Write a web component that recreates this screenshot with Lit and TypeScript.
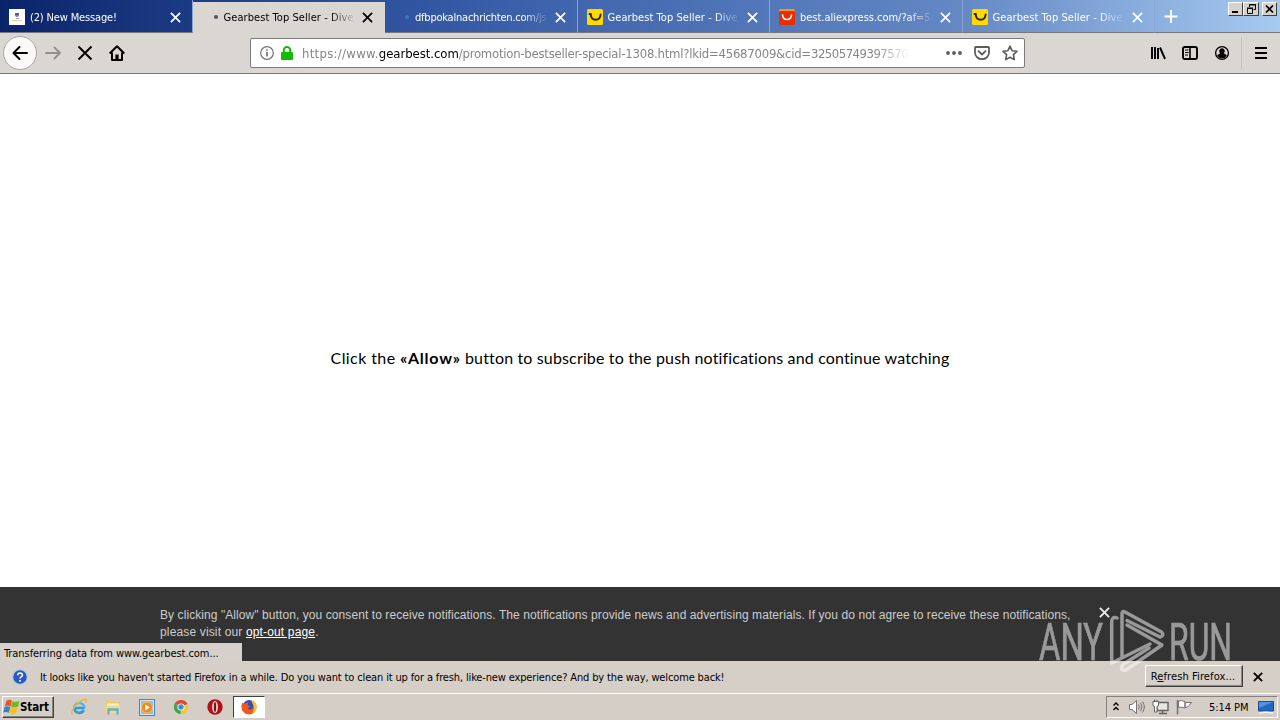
import { LitElement, css, html, svg } from "lit";
import { customElement, property } from "lit/decorators.js";
import { classMap } from "lit/directives/class-map.js";

interface Tab {
	title: string;
	icon: "mail" | "gear" | "ali" | "loading";
	active?: boolean;
	kind: string;
}

const TABS: Tab[] = [
	{ title: "(2) New Message!", icon: "mail", kind: "message" },
	{ title: "Gearbest Top Seller - Dive i", icon: "loading", active: true, kind: "gearbest" },
	{ title: "dfbpokalnachrichten.com/js", icon: "loading", kind: "dfb" },
	{ title: "Gearbest Top Seller - Dive i", icon: "gear", kind: "gearbest" },
	{ title: "best.aliexpress.com/?af=5c", icon: "ali", kind: "best" },
	{ title: "Gearbest Top Seller - Dive i", icon: "gear", kind: "gearbest" },
];

const cross = (size: number, width: number) => html`
	<svg width=${size} height=${size} viewBox="0 0 12 12" fill="none" stroke="currentColor" stroke-width=${width}>
		<path d="M1 1l10 10M11 1L1 11" />
	</svg>
`;

const favicons = {
	mail: svg`<rect width="16" height="16" fill="#fff" /><circle cx="8" cy="6" r="2" fill="#a96a8f" /><path d="M6 5h4" stroke="#4a4168" stroke-width="1.4" /><path d="M3 11.5h10" stroke="#d8dca8" stroke-width="1.2" /><path d="M7 9.5h3" stroke="#8d9ad0" />`,
	gear: svg`<rect width="16" height="16" rx="1.5" fill="#ffda00" /><path d="M2.500 5h1.200q.3 5.800 5 5.800 4.600-.1 4.900-5.300" fill="none" stroke="#2b2100" stroke-width="1.900" stroke-linecap="round" />`,
	ali: svg`<path d="M0 1.5Q0 0 1.5 0h13Q16 0 16 1.500V5H0z" fill="#f7971c" /><rect y="2" width="16" height="14" rx="1.500" fill="#e62e04" /><path d="M3.500 6c.5 6 8.500 6 9 0" fill="none" stroke="#fff" stroke-width="1.700" stroke-linecap="round" />`,
	loading: svg`<circle cx="8" cy="8" r="2" fill="currentColor" />`,
};

@customElement("browser-tab")
class BrowserTab extends LitElement {
	@property({ attribute: false }) tab!: Tab;

	static styles = css`
		:host {
			display: block;
			width: 192.5px;
			height: 33px;
		}
		.tab {
			display: flex;
			align-items: center;
			box-sizing: border-box;
			height: 33px;
			padding: 2px 11px 0 9px;
			color: #fff;
			border-right: 1px solid #8aa5d4;
			border-bottom: 1px solid #77787c;
		}
		.tab.active {
			height: 31px;
			margin: 2px 0.5px 0 0.5px;
			padding: 0 12px 0 9px;
			color: #000;
			background: #dad6d1;
			border-right: 0;
			border-color: #dad6d1;
		}
		.icon {
			width: 16px;
			height: 16px;
			margin-right: 5px;
			flex: none;
		}
		.loading {
			color: #4377bd;
			margin: 0 0 0 5px;
		}
		.active .loading {
			color: #53515b;
			margin-left: 6px;
			margin-right: -0.5px;
		}
		.title {
			flex: 1;
			overflow: hidden;
			white-space: nowrap;
			padding-top: 1px;
			font-size: 11px;
			line-height: 16px;
			margin-right: 6px;
			-webkit-mask-image: linear-gradient(to left, transparent, #000 26px);
		}
		.message {
			letter-spacing: -0.15px;
		}
		.gearbest {
			letter-spacing: 0.07px;
		}
		.dfb {
			letter-spacing: -0.22px;
		}
		.best {
			letter-spacing: -0.03px;
		}
		.close {
			display: flex;
		}
	`;

	render() {
		const { title, icon, active, kind } = this.tab;
		return html`
			<div class=${classMap({ tab: true, active: !!active })}>
				<svg class=${classMap({ icon: true, loading: icon === "loading" })} viewBox="0 0 16 16">${favicons[icon]}</svg>
				<span class=${classMap({ title: true, [kind]: true })}>${title}</span>
				<span class="close">${cross(11, 1.9)}</span>
			</div>
		`;
	}
}

@customElement("nav-bar")
class NavBar extends LitElement {
	static styles = css`
		:host {
			display: flex;
			align-items: center;
			box-sizing: border-box;
			height: 41px;
			padding: 0 11px 1px 3px;
			background: #dad6d1;
			border-bottom: 1px solid #77787a;
		}
		svg {
			display: block;
			flex: none;
			fill: none;
			stroke: currentColor;
		}
		.back {
			display: grid;
			place-items: center;
			box-sizing: border-box;
			width: 34px;
			height: 34px;
			border: 1px solid #aaa7a3;
			border-radius: 50%;
			background: #faf9f7;
		}
		.nav {
			display: flex;
			gap: 16px;
			margin-left: 8px;
			width: 205px;
		}
		.forward {
			color: #92908c;
		}
		.url {
			display: flex;
			align-items: center;
			box-sizing: border-box;
			width: 775px;
			height: 30px;
			padding: 0 6px 0 8px;
			background: #fff;
			border: 1px solid #7b7b7b;
			border-radius: 2px;
		}
		.address {
			width: 608px;
			margin-left: 7px;
			padding-top: 2px;
			overflow: hidden;
			white-space: nowrap;
			font-size: 13px;
			line-height: 20px;
			color: #858585;
			letter-spacing: -0.24px;
			-webkit-mask-image: linear-gradient(to left, transparent, #000 36px);
		}
		.scheme {
			letter-spacing: 0.3px;
		}
		.domain {
			color: #000;
			letter-spacing: -0.05px;
		}
		.cid {
			letter-spacing: -0.5px;
		}
		.info {
			color: #737373;
			margin-right: 4px;
		}
		.actions {
			display: flex;
			gap: 12px;
			margin-left: auto;
			color: #5c5c5c;
		}
		.dots {
			fill: currentColor;
			stroke: none;
		}
		.tools {
			display: flex;
			gap: 16px;
			margin-left: auto;
		}
		.divider {
			width: 1px;
			height: 32px;
			margin: 0 11px;
			background: #c4c1bc;
		}
	`;

	render() {
		return html`
			<span class="back">
				<svg width="16" height="16" viewBox="0 0 16 16" stroke-width="2" stroke-linecap="round" stroke-linejoin="round"><path d="M15 8H1.500M7.500 2l-6 6 6 6" /></svg>
			</span>
			<div class="nav">
				<svg class="forward" width="16" height="16" viewBox="0 0 16 16" stroke-width="1.800" stroke-linecap="round" stroke-linejoin="round"><path d="M1 8h14M9.500 2.500L15 8l-5.500 5.500" /></svg>
				<svg width="16" height="16" viewBox="0 0 16 16" stroke-width="1.900"><path d="M1.500 1.500l13 13M14.500 1.500l-13 13" /></svg>
				<svg width="16" height="16" viewBox="0 0 16 16" stroke-width="2" stroke-linejoin="round"><path d="M.7 8.500L8 1.300l7.300 7.200M3 7.500V15h10V7.500" /><path d="M8 15V9.500" stroke-width="3.200" /></svg>
			</div>
			<div class="url">
				<svg class="info" width="16" height="16" viewBox="0 0 16 16" stroke-width="1.200"><circle cx="8" cy="8" r="6.300" /><path d="M8 7v4.500M8 4.200v1.600" stroke-width="1.700" /></svg>
				<svg width="16" height="16" viewBox="0 0 16 16"><rect x="2" y="7" width="12" height="8" rx="1.200" fill="#12bc00" stroke="none" /><path d="M4.800 8V5.200a3.200 3.200 0 0 1 6.400 0V8" stroke="#12bc00" stroke-width="2" /></svg>
				<span class="address"><span class="scheme">https://www.</span><span class="domain">gearbest.com</span>/promotion-bestseller-special-1308.html?lkid=45687009&amp;cid=<span class="cid">32505749397570</span></span>
				<div class="actions">
					<svg class="dots" width="16" height="16" viewBox="0 0 16 16"><circle cx="2" cy="8" r="1.900" /><circle cx="8" cy="8" r="1.900" /><circle cx="14" cy="8" r="1.900" /></svg>
					<svg width="16" height="16" viewBox="0 0 16 16" stroke-width="1.800" stroke-linejoin="round"><path d="M1.800 2h12.400q.8 0 .8.800V7.500a7 6.700 0 0 1-14 0V2.800Q1 2 1.800 2z" /><path d="M4.500 6.200L8 9.500l3.500-3.300" stroke-linecap="round" /></svg>
					<svg width="16" height="16" viewBox="0 0 16 16" stroke-width="1.600" stroke-linejoin="round"><path d="M8 1.200l2.100 4.500 4.900.6-3.600 3.400.9 4.900L8 12.200l-4.300 2.400.9-4.900L1 6.300l4.900-.6z" /></svg>
				</div>
			</div>
			<div class="tools">
				<svg width="16" height="16" viewBox="0 0 16 16" stroke-width="1.900"><path d="M2 2v12M5 2v12M8 3v11" /><path d="M10 2.500l5 11.500" /></svg>
				<svg width="16" height="16" viewBox="0 0 16 16" stroke-width="1.900"><rect x="1" y="2" width="14" height="12" rx="1.800" /><path d="M8 2v12" stroke-width="1.600" /><path d="M3 5h3.500M3 7.500h3.500M3 10h3" stroke-width="1" /></svg>
				<svg width="16" height="16" viewBox="0 0 16 16" stroke-width="1.300"><circle cx="8" cy="8" r="6.400" /><path d="M8 3.300a2.700 2.700 0 0 1 2 4.600c0 1 2.500 1.200 2.800 2.500A5.400 5.400 0 0 1 8 13.200a5.400 5.400 0 0 1-4.800-2.800C3.500 9.100 6 8.900 6 7.900a2.700 2.700 0 0 1 2-4.600z" fill="currentColor" stroke="none" /></svg>
			</div>
			<span class="divider"></span>
			<svg width="16" height="16" viewBox="0 0 16 16" stroke-width="2"><path d="M2 3h12M2 8h12M2 13h12" /></svg>
		`;
	}
}

@customElement("task-bar")
class TaskBar extends LitElement {
	static styles = css`
		:host {
			display: flex;
			align-items: center;
			box-sizing: border-box;
			height: 27px;
			padding: 0 2px 0;
			background: #d5cec6;
			border-top: 1px solid #fff;
		}
		svg {
			display: block;
			flex: none;
		}
		.start {
			display: flex;
			align-items: center;
			box-sizing: border-box;
			width: 52px;
			height: 22px;
			font-size: 11.5px;
			font-weight: bold;
			letter-spacing: -0.1px;
			border: 1px solid;
			border-color: #fff #404040 #404040 #fff;
			box-shadow: inset -1px -1px #888580;
		}
		.apps {
			display: flex;
			align-items: center;
			gap: 18px;
			margin-left: 17px;
		}
		.current {
			display: grid;
			place-items: center;
			box-sizing: border-box;
			width: 32px;
			height: 22px;
			margin-left: -8px;
			background: #fff;
			border: 1px solid;
			border-color: #404040 #fff #fff #404040;
		}
		.tray {
			display: flex;
			align-items: center;
			box-sizing: border-box;
			width: 172px;
			height: 22px;
			margin-left: auto;
			padding: 0 2px 0 5px;
			font-size: 11px;
			border: 1px solid;
			border-color: #85817b #fff #fff #85817b;
		}
		.volume {
			margin-left: 7px;
		}
		.network {
			margin-left: 6px;
		}
		.flag {
			margin-left: 7px;
		}
		.time {
			width: 41px;
			margin: 0 8px 0 16px;
			white-space: nowrap;
			letter-spacing: -0.05px;
		}
	`;

	render() {
		return html`
			<div class="start">
				<svg width="17" height="16" viewBox="0 0 17 16">
					<path d="M3.500 1.700q3-1.900 5.400.1L7.500 7.400q-2.800-1.500-5.700-.1z" fill="#e8541d" />
					<path d="M9.400 2.200q3.200 1.500 7-.1L15 7.700q-3.400 1.500-6.900.1z" fill="#75b628" />
					<path d="M1.600 8q3-1.400 5.700.1L5.800 13.800q-2.900-1.600-5.700-.1z" fill="#3f7fc9" />
					<path d="M7.900 8.600q3.400 1.400 6.900.1L13.200 14.200q-3.400 1.400-6.800 0z" fill="#f5bf1e" />
				</svg>
				Start
			</div>
			<div class="apps">
				<svg width="16" height="18" viewBox="0 0 16 18">
					<path d="M13.600 10H3.500a4.800 4.800 0 0 0 9.200 2" fill="none" stroke="#319bd7" stroke-width="2.600" />
					<path d="M3.300 10a5 5 0 1 1 10 0" fill="none" stroke="#4db4e8" stroke-width="2.600" />
					<path d="M1.500 16.500C-1 14 5 4 13.500 1.500c2-.4 2.200 1 1.200 3" fill="none" stroke="#e5b83c" stroke-width="1.400" />
				</svg>
				<svg width="16" height="16" viewBox="0 0 16 16">
					<path d="M1 1.500h5l1.500 1.500H15v11H1z" fill="#ecc96a" />
					<path d="M2 4.500h12v4H2z" fill="#fff6ce" />
					<path d="M1 6.500h14V14H1z" fill="#f2d983" />
					<path d="M3.500 15.500v-5h9v5" fill="none" stroke="#69add4" stroke-width="2.400" />
				</svg>
				<svg width="16" height="17" viewBox="0 0 16 17">
					<rect x=".5" y=".5" width="15" height="16" fill="#d5e7f5" stroke="#4a86bd" />
					<rect x="2" y="2" width="12" height="13" fill="#8fbde0" />
					<circle cx="8" cy="8.500" r="5.500" fill="#ef8b1d" stroke="#ffd093" stroke-width=".6" />
					<path d="M6.300 5.500v6l4.600-3z" fill="#fff" />
				</svg>
				<svg width="16" height="16" viewBox="0 0 16 16">
					<path d="M8 8L1.700 4.600A7.200 7.200 0 0 1 14.500 5z" fill="#e24735" />
					<path d="M8 8l6.500-3A7.200 7.200 0 0 1 7.600 15.200z" fill="#f5c929" />
					<path d="M8 8l-.4 7.200A7.200 7.200 0 0 1 1.700 4.600z" fill="#3ea650" />
					<circle cx="8" cy="8" r="3.600" fill="#fff" />
					<circle cx="8" cy="8" r="2.700" fill="#4789dc" />
				</svg>
				<svg width="16" height="16" viewBox="0 0 16 16">
					<ellipse cx="8" cy="8" rx="7.700" ry="7.700" fill="#b51018" />
					<ellipse cx="8" cy="8" rx="2.900" ry="6" fill="#f0e6e2" />
					<ellipse cx="8" cy="8" rx="1.200" ry="5" fill="#870c12" />
				</svg>
				<span class="current">
					<svg width="16" height="16" viewBox="0 0 16 16">
						<circle cx="8.200" cy="7.500" r="6.500" fill="#314fb4" />
						<path d="M1.500 3.500L3.500 5q2-2 4-1.500L6.300 6.200l3 1Q8 9 6.500 8.700q1 2.800 4 1.500 3-1.500 1.500-5.200l-2-4q5.500 2 5.600 7a7.600 7.600 0 0 1-15.200 0q0-2.500 1.100-4.500z" fill="#f4571e" />
						<path d="M10 1q5.500 2 5.600 7-.3 5-5 7 3.500-4 1.500-9.500z" fill="#ffc31f" />
					</svg>
				</span>
			</div>
			<div class="tray">
				<svg width="8" height="16" viewBox="0 0 8 16" fill="none" stroke="#000" stroke-width="1.400"><path d="M1.500 6.500L4 4l2.500 2.500M1.500 11L4 8.500 6.500 11" /></svg>
				<svg class="volume" width="19" height="16" viewBox="-2 0 19 16" fill="#fff" stroke="#74716e"><path d="M.5 5.500H3L7.500 1.500v13L3 10.500H.5z" /><path d="M9.500 5.500q1.800 2.500 0 5M11.500 3.800q3 4.200 0 8.400M13.500 2.500q3.600 5.500 0 11" fill="none" /></svg>
				<svg class="network" width="17" height="16" viewBox="0 0 17 16" fill="#e9e6e2" stroke="#66635f"><path d="M5 3.500h11v8H5z" stroke-width="1.400" /><path d="M7 14.500h8M10.500 12v2" stroke-width="1.400" /><path d="M1 2.500h5.500V6q0 1.500-1.500 1.500V13H2.500V7.500Q1 7.500 1 6z" fill="#fff" /><path d="M2.500.5v2M5 .5v2" /></svg>
				<svg class="flag" width="17" height="16" viewBox="0 0 17 16" fill="#fff" stroke="#74716e"><path d="M1.500 15.500V1" stroke-width="1.500" /><path d="M2.500 2q3-1 6.500.5v6.500q-3.500-1.500-6.500-.5zM9 3.500h6.500l-2.500 3q-1 2-4 2z" /></svg>
				<span class="time">5:14 PM</span>
				<svg width="16" height="16" viewBox="0 0 16 16"><path d="M.5 2.500h15v9.500H.5z" fill="#2467bd" stroke="#1b4a8f" /><path d="M1 3h14L1 9z" fill="#4b94dd" /><path d="M1 14.200q7-2 14 0" fill="none" stroke="#f4f4f4" stroke-width="1.500" /></svg>
			</div>
		`;
	}
}

@customElement("app-root")
class AppRoot extends LitElement {
	static styles = css`
		:host {
			display: flex;
			flex-direction: column;
			position: relative;
			width: 1280px;
			height: 720px;
			overflow: hidden;
			background: #fff;
			color: #000;
			font-family: "DejaVu Sans Condensed", "Noto Sans", sans-serif;
			font-size: 11px;
		}
		.tabs {
			display: flex;
			height: 33px;
			flex: none;
			background: linear-gradient(90deg, #0a246a, #2d4f9c 28%, #4166ae 45%, #6488c4 75%, #a6caf0);
		}
		.new-tab {
			display: flex;
			flex: 1;
			border-bottom: 1px solid #77787c;
			padding: 10px 0 0 9px;
		}
		.window-buttons {
			display: flex;
			height: 14px;
			margin: -8px 3px 0 auto;
		}
		.window-buttons svg {
			background: #d6d2cc;
			border: 1px solid;
			border-color: #fff #404040 #404040 #fff;
		}
		.window-buttons svg:last-child {
			margin-left: 3px;
		}
		.page {
			display: grid;
			flex: 1;
			place-items: center;
			padding-top: 54px;
			font-family: "Lato", sans-serif;
			font-size: 16px;
			box-sizing: border-box;
		}
		.prompt {
			letter-spacing: 0.15px;
		}
		.prompt span {
			letter-spacing: 0.4px;
		}
		.prompt b {
			letter-spacing: 0.75px;
		}
		.consent {
			display: flex;
			box-sizing: border-box;
			height: 74px;
			padding: 20px 0 0 160px;
			background: #333;
			color: #ccc;
			font: 12px/17px "Liberation Sans", sans-serif;
			letter-spacing: 0.078px;
		}
		.consent p {
			margin: 0;
			width: 939px;
			white-space: nowrap;
		}
		.consent .opt-out {
			letter-spacing: 0.15px;
		}
		.consent a {
			color: #fff;
			text-decoration: underline;
		}
		.consent .close {
			margin-top: -1px;
			color: #eee;
		}
		.status {
			position: absolute;
			left: 0;
			top: 643px;
			box-sizing: border-box;
			width: 242px;
			height: 18px;
			padding-left: 4px;
			line-height: 21px;
			letter-spacing: -0.07px;
			background: #d5d0c9;
		}
		.notice {
			display: flex;
			align-items: center;
			height: 32px;
			padding: 0 17px 0 12px;
			background: #d6cfc7;
		}
		.notice .text {
			margin-left: 12px;
			flex: 1;
			letter-spacing: -0.143px;
			white-space: nowrap;
		}
		.refresh {
			box-sizing: border-box;
			width: 98px;
			height: 22px;
			margin: -2px 10px 0 0;
			padding-right: 2px;
			line-height: 21px;
			text-align: center;
			letter-spacing: 0.1px;
			border: 1px solid;
			border-color: #fff #404040 #404040 #fff;
			box-shadow: inset -1px -1px #888580;
		}
		.watermark {
			position: absolute;
			left: 1035px;
			top: 605px;
			overflow: visible;
			opacity: 0.5;
		}
	`;

	render() {
		return html`
			<div class="tabs">
				${TABS.map((tab) => html`<browser-tab .tab=${tab}></browser-tab>`)}
				<div class="new-tab">
					<svg width="14" height="14" viewBox="0 0 14 14" stroke="#fff" stroke-width="2"><path d="M7 0v13M.5 6.500h13" /></svg>
					<div class="window-buttons">
						<svg width="13" height="12" viewBox="0 0 13 12"><path d="M3 9h6" stroke="#000" stroke-width="2" /></svg>
						<svg width="14" height="12" viewBox="0 0 14 12" fill="none" stroke="#000"><path d="M5.500 4V1.500h6v5H9.500M5 2h7M3.500 5.500h5v5h-5zM3 5h6" /></svg>
						<svg width="13" height="12" viewBox="0 0 13 12"><path d="M3 2.500l7 7M10 2.500l-7 7" stroke="#000" stroke-width="1.700" /></svg>
					</div>
				</div>
			</div>
			<nav-bar></nav-bar>
			<main class="page"><div class="prompt"><span>Click the </span><b>«Allow»</b> button to subscribe to the push notifications and continue watching</div></main>
			<div class="consent">
				<p>By clicking "Allow" button, you consent to receive notifications. The notifications provide news and advertising materials. If you do not agree to receive these notifications,<br /><span class="opt-out">please visit our <a>opt-out page</a>.</span></p>
				<span class="close">${cross(11, 2)}</span>
			</div>
			<div class="notice">
				<svg width="16" height="16" viewBox="0 0 16 16">
					<circle cx="8" cy="8" r="7.300" fill="#2858bd" stroke="#b3c6e4" stroke-width="1.200" />
					<path d="M5.700 6.300q0-2.300 2.400-2.300t2.300 2q0 1.200-1.300 1.900Q8 8.500 8 9.500" fill="none" stroke="#fff" stroke-width="1.600" />
					<circle cx="8" cy="11.700" r="1" fill="#fff" />
				</svg>
				<span class="text">It looks like you haven't started Firefox in a while. Do you want to clean it up for a fresh, like-new experience? And by the way, welcome back!</span>
				<span class="refresh">R<u>e</u>fresh Firefox...</span>
				${cross(10, 2.2)}
			</div>
			<task-bar></task-bar>
			<div class="status">Transferring data from www.gearbest.com...</div>
			<svg class="watermark" width="200" height="72" viewBox="0 0 200 72" fill="#fff" stroke="#fff" stroke-width=".7" font-family="Roboto, sans-serif" font-size="52">
				<text x="4" y="54.500" textLength="64" lengthAdjust="spacingAndGlyphs">ANY</text>
				<text x="134" y="54.500" textLength="63" lengthAdjust="spacingAndGlyphs">RUN</text>
				<g fill="none" stroke-width="3.500" stroke-linejoin="round" stroke-linecap="round">
					<path d="M82 13q-5-2-5.300 3.500V58L115 39" />
					<path d="M87 52V9q0-3.500 3-2l36.500 20q3.500 3.500-1.500 5L92 15.500" />
					<path d="M92 20l35 20L91 65q-4 1.500-4.500-2 0-2.500 3-4.500L114 43" />
				</g>
			</svg>
		`;
	}
}
